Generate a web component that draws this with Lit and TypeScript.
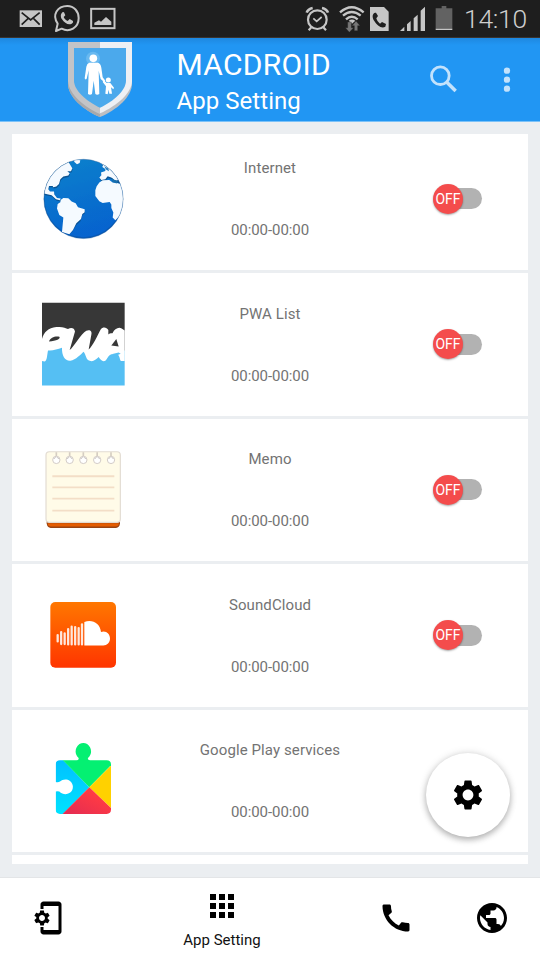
import { LitElement, html, svg, css, type TemplateResult } from "lit";
import { customElement, property, state } from "lit/decorators.js";

interface AppEntry {
  name: string;
  hours: string;
  icon: TemplateResult;
}

const globe = html`<svg viewBox="123 80.25 252 252" width="84" height="84">
  <defs>
    <linearGradient id="sea" x1="0.3" y1="0" x2="0.6" y2="1">
      <stop offset="0" stop-color="#0c80cc" /><stop offset="1" stop-color="#0762cf" />
    </linearGradient>
    <clipPath id="disc"><circle cx="250.5" cy="206" r="119" /></clipPath>
  </defs>
  <circle cx="250.5" cy="206" r="119" fill="url(#sea)" />
  <g clip-path="url(#disc)">
    <circle cx="250.5" cy="204" r="119" fill="none" stroke="#0a4f9a" stroke-width="4" opacity=".55" />
    <g fill="#0a4b85" opacity=".8" transform="translate(1 4)">
      <path d="M120 80H216L206 96L217 114L213 123H202L209 129L205 136L190 139L181 147L177 161L169 169L160 171L158 167H147L145 177L150 184L162 184L163 193L171 203L182 205L180 210L168 207L155 195L132 190L120 190Z" />
      <path d="M298 80L307 103L318 112L315 121L302 126V135L298 143L304 149L317 147L323 139L336 143L354 155L380 160V80Z" />
      <path d="M205 310L216 300L228 280L241 268L246 251L254 245V238L241 231L232 229Z" />
    </g>
    <g fill="#f5faff">
      <path d="M120 80H216L206 96L217 114L213 123H202L209 129L205 136L190 139L181 147L177 161L169 169L160 171L158 167H147L145 177L150 184L162 184L163 193L171 203L182 205L180 210L168 207L155 195L132 190L120 190Z" />
      <path d="M182 209L190 203L205 204L215 214L227 219L234 231L254 237V246L247 251L243 266L229 279L219 299L208 312L186 305L190 262L178 254L171 235L173 221L181 216Z" />
      <path d="M219 87L224 96L231 102L239 98L241 90Z" />
      <path d="M304 100L309 104L307 110L316 116L316 122L303 127L304 135L298 142L304 149L316 147L323 138L334 142L343 149L351 151L360 145L335 110L310 92Z" />
      <path d="M298 157L308 150L328 149L338 157L351 158L375 165V240L346 270L338 262L340 247L334 233V223L329 215L308 218L298 213L286 197V180L290 168Z" />
    </g>
    <path d="M336 143L345 150L354 153L350 160L337 155Z" fill="#176fae" />
    <path d="M313 108L325 115L327 123L318 118Z" fill="#287fbd" />
  </g>
  <circle cx="250.5" cy="206" r="119" fill="none" stroke="#3c6c9a" stroke-opacity=".55" stroke-width="2" />
</svg>`;

const pwa = html`<svg viewBox="123 66.75 252 252" width="84" height="84">
  <path d="M126 69H374V213H126Z" fill="#373737" />
  <path d="M126 244L141 208L186 202L215 225L248 208L298 225L374 212V317H126Z" fill="#55bff3" />
  <path d="M126 178C132 157 145 144 169 142C186 140 197 144 204 148C214 142 223 145 225 155L209 211C222 201 243 162 259 153C270 148 277 155 274 165L266 209C278 200 293 165 302 149C309 140 320 142 325 151L325 164C333 158 336 162 338 160C343 148 355 141 365 146L374 152V244H366C358 245 362 234 354 225L333 224C325 226 322 237 317 242C309 248 301 241 296 232C288 240 279 247 269 243C258 241 258 225 251 216C242 224 228 240 211 243C195 244 185 228 186 204C172 208 158 214 144 212C141 225 142 242 134 245L126 244Z" fill="#fff" />
  <path d="M147 185C151 173 166 168 178 171C183 177 169 184 147 185Z" fill="#373737" />
  <path d="M334 197L349 178L356 200Z" fill="#373737" />
  <path d="M331 224L356 218L362 222L350 227Z" fill="#55bff3" />
</svg>`;

const memo = html`<svg viewBox="123 53.25 252 252" width="84" height="84">
  <path d="M140 265H360V280Q358 293 348 293H152Q142 293 140 280Z" fill="#9a4413" />
  <path d="M143 279H357Q356 289 347 289H153Q144 289 143 279Z" fill="#e45d02" />
  <rect x="138" y="64.500" width="223" height="212" rx="10" fill="#fffbe8" stroke="#e2dbd2" stroke-width="3.500" />
  ${[138, 171.5, 205, 241].map((y) => svg`<path d="M157 ${y}H343" stroke="#f3dec7" stroke-width="5.500" />`)}
  ${[169, 209, 250, 291.5, 333].map(
    (x) => svg`<path d="M${x} 66V82" stroke="#d5cdc2" stroke-width="5" />
      <circle cx="${x}" cy="89" r="11" fill="#fff" stroke="#d3ccc7" stroke-width="3" />
      <path d="M${x - 9} 87A10 10 0 0 1 ${x + 9} 87L${x} 81Z" fill="#948c88" />`
  )}
</svg>`;

const soundcloud = html`<svg viewBox="123 69.75 252 252" width="84" height="84">
  <defs>
    <linearGradient id="sun" x1="0" y1="0" x2="0" y2="1">
      <stop offset="0" stop-color="#ff7700" /><stop offset="1" stop-color="#ff3500" />
    </linearGradient>
  </defs>
  <rect x="151" y="97" width="197" height="197" rx="15" fill="url(#sun)" />
  ${[
    [173, 196, 215],
    [183.5, 187, 223],
    [194, 191, 223],
    [204.5, 178, 224],
    [215, 171, 224],
    [225.5, 172, 224],
    [236, 175, 224],
    [246, 164, 224],
  ].map(([x, a, b]) => svg`<path d="M${x} ${a}V${b}" stroke="#fff" stroke-opacity=".86" stroke-width="6.800" stroke-linecap="round" />`)}
  <path d="M253 157C276 147 301 161 303 187C317 181 330 192 330 206C330 218 321 227 310 227H253Z" fill="#fff" />
</svg>`;

const play = html`<svg viewBox="123 86.25 252 252" width="84" height="84">
  <defs>
    <linearGradient id="aqua" x1="0" y1="0" x2="0" y2="1"><stop offset="0" stop-color="#00bfff" /><stop offset="1" stop-color="#00e4ff" /></linearGradient>
    <linearGradient id="rose" x1="1" y1="0" x2="0" y2="1"><stop offset=".3" stop-color="#ff3a44" /><stop offset="1" stop-color="#df2a54" /></linearGradient>
    <clipPath id="piece">
      <path d="M180 150H229Q237 150 236 143C225 134 225 121 230 111C238 94 262 94 270 111C275 121 275 134 264 143Q262 150 270 150H320Q333 150 333 163V298Q333 311 320 311H180Q167 311 167 298V244Q173 242 178 244C190 256 210 253 216 241C221 231 219 219 210 212C200 205 187 207 180 214Q174 218 167 215V163Q167 150 180 150Z" />
    </clipPath>
  </defs>
  <g clip-path="url(#piece)">
    <path d="M160 140H180L268 231L180 320H160Z" fill="url(#aqua)" />
    <path d="M179 140L220 90H280L340 158L268 231Z" fill="#04f072" />
    <path d="M341 158L268 231L341 301Z" fill="#ffd100" />
    <path d="M341 301L268 231L181 318H341Z" fill="url(#rose)" />
  </g>
</svg>`;

const shield = html`<svg viewBox="198 120 204 234" width="68" height="78">
  <path d="M204 126H396V251C396 290 350 330 300 351C250 330 204 290 204 251Z" fill="#bcbec2" />
  <path d="M204 126H300V345C250 322 204 283 204 244Z" fill="#c3c4c7" />
  <path d="M300 126H396V243C396 279 350 318 300 340Z" fill="#eef0f4" />
  <path d="M204 243C207 285 255 322 300 342V351C250 330 204 290 204 251Z" fill="#a7a9ac" />
  <path d="M222 144H378V242C378 270 342 303 300 323C258 303 222 270 222 242Z" fill="#4ba9ec" />
  <circle cx="279" cy="176" r="21" fill="#8bcbf7" opacity=".45" />
  <g fill="#fff">
    <circle cx="280" cy="175" r="11.500" />
    <path d="M268 188H293Q302 190 304 203L308 232L316 242L313 247L302 237L296 212L298 282Q291 287 286 282L281 242L276 282Q270 287 264 282L266 211L260 236Q256 241 254 235L259 200Q261 190 268 188Z" />
    <circle cx="325" cy="240" r="7.500" />
    <path d="M311 240L320 249H331L342 263L340 268L333 262L336 281H328L326 269L323 283L316 281L318 259L308 246Z" />
  </g>
</svg>`;

const cog =
  "M19.140 12.940c.04-.3.06-.61.06-.94 0-.32-.02-.64-.07-.94l2.030-1.580c.18-.14.23-.41.12-.61l-1.920-3.320c-.12-.22-.37-.29-.59-.22l-2.390.96c-.5-.38-1.030-.7-1.620-.94L14.400 2.810c-.04-.24-.24-.41-.48-.41h-3.840c-.24 0-.43.17-.47.41L9.250 5.350c-.59.24-1.130.57-1.620.94L5.240 5.330c-.22-.08-.47 0-.59.22L2.740 8.870c-.12.21-.08.47.12.61l2.030 1.580c-.05.3-.09.63-.09.94s.02.64.07.94l-2.030 1.580c-.18.14-.23.41-.12.61l1.920 3.320c.12.22.37.29.59.22l2.390-.96c.5.38 1.030.7 1.620.94l.36 2.540c.05.24.24.41.48.41h3.840c.24 0 .44-.17.47-.41l.36-2.540c.59-.24 1.130-.56 1.620-.94l2.390.96c.22.08.47 0 .59-.22l1.920-3.320c.12-.22.07-.47-.12-.61l-2.010-1.580zM12 15.600c-1.980 0-3.600-1.620-3.600-3.600s1.620-3.600 3.600-3.600 3.600 1.620 3.600 3.600-1.620 3.600-3.600 3.600z";

const phoneSetup =
  "M11.800 12.500v-1l1.100-.8c.1-.1.1-.2.1-.3l-1-1.700c-.1-.1-.2-.2-.3-.1l-1.300.4c-.3-.2-.6-.4-.9-.5l-.2-1.300c0-.1-.1-.2-.3-.2H7c-.1 0-.2.1-.3.2l-.2 1.300c-.3.1-.6.3-.9.5l-1.300-.5c-.1 0-.2 0-.3.1l-1 1.700c-.1.1 0 .2.1.3l1.100.8v1l-1.100.8c-.1.2-.1.3-.1.4l1 1.700c.1.1.2.2.3.1l1.400-.4c.3.2.6.4.9.5l.2 1.300c-.1.1.1.2.2.2h2c.1 0 .2-.1.3-.2l.2-1.300c.3-.1.6-.3.9-.5l1.300.5c.1 0 .2 0 .3-.1l1-1.700c.1-.1 0-.2-.1-.3l-1.100-.9zM8 14c-1.100 0-2-.9-2-2s.9-2 2-2 2 .9 2 2-.9 2-2 2zM19 1H9c-1.100 0-2 .9-2 2v3h2V4h10v16H9v-2H7v3c0 1.100.9 2 2 2h10c1.100 0 2-.9 2-2V3c0-1.100-.9-2-2-2z";

const gridDots =
  "M4 8h4V4H4v4zm6 12h4v-4h-4v4zm-6 0h4v-4H4v4zm0-6h4v-4H4v4zm6 0h4v-4h-4v4zm6-10v4h4V4h-4zm-6 4h4V4h-4v4zm6 6h4v-4h-4v4zm0 6h4v-4h-4v4z";

const handset =
  "M20.010 15.380c-1.230 0-2.420-.2-3.530-.56-.35-.12-.74-.03-1.010.24l-1.570 1.970c-2.830-1.350-5.480-3.900-6.890-6.830l1.950-1.660c.27-.28.35-.67.24-1.020-.37-1.110-.56-2.300-.56-3.530 0-.54-.45-.99-.99-.99H4.190C3.650 3 3 3.240 3 3.990 3 13.280 10.730 21 20.010 21c.71 0 .99-.63.99-1.180v-3.450c0-.54-.45-.99-.99-.99z";

const earth =
  "M12 2C6.480 2 2 6.480 2 12s4.480 10 10 10 10-4.480 10-10S17.520 2 12 2zm-1 17.930c-3.950-.49-7-3.850-7-7.930 0-.62.08-1.210.21-1.790L9 15v1c0 1.100.9 2 2 2v1.930zm6.900-2.540c-.26-.81-1-1.390-1.900-1.390h-1v-3c0-.55-.45-1-1-1H8v-2h2c.55 0 1-.45 1-1V7h2c1.100 0 2-.9 2-2v-.41c2.930 1.190 5 4.060 5 7.410 0 2.080-.8 3.970-2.100 5.390z";

const material = (d: string) => html`<svg viewBox="0 0 24 24" width="36" height="36"><path d="${d}" /></svg>`;

@customElement("status-bar")
class StatusBar extends LitElement {
  static styles = css`
    :host {
      display: flex;
      height: 38px;
      box-sizing: border-box;
      padding: 0 13px 0 18px;
      align-items: flex-start;
      background: #1e1e1e;
      color: #c9c9c9;
      border-bottom: 1px solid #3a3430;
    }
    svg {
      display: block;
      flex: none;
    }
    .space {
      flex: 1;
    }
    .clock {
      font: 300 26.500px/37px Roboto, sans-serif;
      letter-spacing: -0.3px;
      margin-left: 10px;
      width: 63px;
      white-space: nowrap;
      color: #cfcfcf;
    }
  `;
  render() {
    return html`
      <svg viewBox="54 0 300 111" width="100" height="37">
        <rect x="59" y="31" width="67" height="50" fill="#c6c6c6" />
        <path d="M65 38L92 60L119 38M65 74L84 56M119 74L101 56" fill="none" stroke="#1e1e1e" stroke-width="5" />
        <path d="M168 93L173 71C155 45 172 18 202 18C222 18 236 34 236 54C236 84 208 98 185 86Z" fill="none" stroke="#c6c6c6" stroke-width="6" stroke-linejoin="round" />
        <path d="M189 36C181 40 181 51 186 58C193 69 206 77 215 71C220 68 220 64 218 62L209 57L203 63C197 60 193 56 191 51L196 46L192 37Z" fill="#c6c6c6" />
        <rect x="273.500" y="26.500" width="70" height="58" fill="none" stroke="#c6c6c6" stroke-width="6" />
        <path d="M283 75V68L297 61L303 65L318 51L334 65V75Z" fill="#c6c6c6" />
      </svg>
      <div class="space"></div>
      <svg viewBox="102 0 450 111" width="150" height="37">
        <g fill="none" stroke="#c6c6c6" stroke-width="6.500">
          <circle cx="142" cy="59" r="28" />
          <path d="M130 55L140 64L155 51" stroke-width="5" />
          <path d="M110 38Q114 27 128 24M174 38Q170 27 156 24" stroke-width="8" />
          <path d="M124 82L116 91M160 82L168 91" />
          <path d="M210 37Q245 6 281 37" stroke-width="7" />
          <path d="M219 47Q245 25 272 47" stroke-width="7" />
          <path d="M228 58Q245 42 263 58" stroke-width="7" />
        </g>
        <path d="M236 62Q246 55 256 62L246 71Z" fill="#c6c6c6" />
        <path d="M233 66H244V83H251L238 97L226 83H233ZM253 92H263V77H270L258 63L246 77H253Z" fill="#777" stroke="#1e1e1e" stroke-width="1" />
        <path d="M300 21H342L356 35V93H300Z" fill="#c6c6c6" />
        <path d="M315 38C305 42 307 54 313 63C321 77 335 87 346 80L348 72L336 66L330 71C324 66 320 60 319 55L324 48L318 38Z" fill="#1e1e1e" />
        <path d="M390 93L403 80V93ZM411 93V73L422 63V93ZM431 93V55L443 44V93ZM452 93V32L465 20V93Z" fill="#c6c6c6" />
        <path d="M515 18H529V25H547V86H497V25H515Z" fill="#626262" />
        <path d="M497 86H547V90H497Z" fill="#c6c6c6" />
      </svg>
      <div class="clock">14:10</div>
    `;
  }
}

@customElement("app-header")
class AppHeader extends LitElement {
  static styles = css`
    :host {
      display: flex;
      height: 84px;
      box-sizing: border-box;
      padding: 2px 0 0 66px;
      align-items: flex-start;
      background: linear-gradient(#1e88e0, #2196f3 7px);
      border-bottom: 1px solid #7cc2f8;
      color: #fff;
      font-family: Roboto, sans-serif;
    }
    svg {
      display: block;
      flex: none;
    }
    .titles {
      margin: 5px 0 0 42.500px;
      width: 249.500px;
      white-space: nowrap;
    }
    .brand {
      font-size: 30px;
      line-height: 40px;
      letter-spacing: 0.3px;
    }
    .page {
      font-size: 24px;
      line-height: 32px;
      letter-spacing: 0.05px;
    }
  `;
  render() {
    return html`
      ${shield}
      <div class="titles">
        <div class="brand">MACDROID</div>
        <div class="page">App Setting</div>
      </div>
      <svg viewBox="468 120 258 234" width="86" height="78">
        <circle cx="511" cy="227" r="26.500" fill="none" stroke="#c3e2fc" stroke-width="8.500" />
        <path d="M529 245L557 273" stroke="#c3e2fc" stroke-width="10.500" />
        <g fill="#c3e2fc">
          <circle cx="711" cy="212" r="9.500" /><circle cx="711" cy="239" r="9.500" /><circle cx="711" cy="266" r="9.500" />
        </g>
      </svg>
    `;
  }
}

@customElement("toggle-switch")
class ToggleSwitch extends LitElement {
  static styles = css`
    :host {
      display: flex;
      align-items: center;
      width: 50px;
      height: 30px;
    }
    .track {
      display: flex;
      align-items: center;
      width: 41.500px;
      height: 21px;
      margin-left: 7.500px;
      border-radius: 11px;
      background: #b2b2b2;
    }
    .knob {
      flex: none;
      width: 30px;
      height: 30px;
      margin-left: -7px;
      border-radius: 50%;
      background: #f44c4c;
      box-shadow: 0 1px 2px rgba(0, 0, 0, 0.35);
      color: #fff;
      font: 400 14px/31px Roboto, sans-serif;
      text-align: center;
    }
  `;
  render() {
    return html`<div class="track"><div class="knob">OFF</div></div>`;
  }
}

@customElement("app-row")
class AppRow extends LitElement {
  static styles = css`
    :host {
      display: grid;
      grid-template-columns: 142px 232px 1fr;
      flex: none;
      align-items: center;
      height: 142.500px;
      background: #fff;
      font: 400 15px/20px Roboto, sans-serif;
      color: #737373;
      white-space: nowrap;
    }
    .icon {
      padding-left: 29px;
    }
    svg {
      display: block;
    }
    .info {
      display: flex;
      flex-direction: column;
      align-items: center;
      gap: 42px;
      padding-top: 1px;
    }
    .name {
      letter-spacing: 0.1px;
    }
    .hours {
      letter-spacing: -0.07px;
    }
    .control {
      padding-left: 46.500px;
    }
  `;
  @property({ attribute: false }) entry!: AppEntry;
  render() {
    const { name, hours, icon } = this.entry;
    return html`
      <div class="icon">${icon}</div>
      <div class="info"><span class="name">${name}</span><span class="hours">${hours}</span></div>
      <div class="control"><toggle-switch></toggle-switch></div>
    `;
  }
}

@customElement("app-root")
class AppRoot extends LitElement {
  static styles = css`
    :host {
      display: flex;
      flex-direction: column;
      position: relative;
      height: 960px;
      overflow: hidden;
      background: #ebeef1;
      font-family: Roboto, sans-serif;
    }
    .list {
      display: flex;
      flex-direction: column;
      gap: 3px;
      height: 730px;
      margin: 12px 12px 13px;
      overflow: hidden;
    }
    .list > :first-child {
      margin-top: -6.500px;
    }
    .next {
      flex: none;
      height: 142px;
      background: #fff;
    }
    .fab {
      position: absolute;
      right: 30px;
      bottom: 123px;
      width: 84px;
      height: 84px;
      border-radius: 50%;
      background: #fff;
      display: grid;
      place-items: center;
      box-shadow: 0 3px 6px rgba(0, 0, 0, 0.26), 0 0 8px rgba(0, 0, 0, 0.12);
    }
    svg {
      display: block;
    }
    .nav {
      display: grid;
      grid-template-columns: 96px 252px 96px 96px;
      flex: 1;
      background: #fff;
      border-top: 1px solid #e3e5e7;
    }
    .tab {
      display: flex;
      flex-direction: column;
      align-items: center;
      padding-top: 22px;
    }
    .tab.active {
      padding-top: 10px;
    }
    .label {
      font-size: 15px;
      line-height: 20px;
      margin-top: 6px;
      color: #111;
    }
  `;
  @state() private entries: AppEntry[] = [
    { name: "Internet", hours: "00:00-00:00", icon: globe },
    { name: "PWA List", hours: "00:00-00:00", icon: pwa },
    { name: "Memo", hours: "00:00-00:00", icon: memo },
    { name: "SoundCloud", hours: "00:00-00:00", icon: soundcloud },
    { name: "Google Play services", hours: "00:00-00:00", icon: play },
  ];
  render() {
    return html`
      <status-bar></status-bar>
      <app-header></app-header>
      <div class="list">
        ${this.entries.map((entry) => html`<app-row .entry=${entry}></app-row>`)}
        <div class="next"></div>
      </div>
      <div class="nav">
        <div class="tab">${material(phoneSetup)}</div>
        <div class="tab active">${material(gridDots)}<span class="label">App Setting</span></div>
        <div class="tab">${material(handset)}</div>
        <div class="tab">${material(earth)}</div>
      </div>
      <div class="fab">${material(cog)}</div>
    `;
  }
}
